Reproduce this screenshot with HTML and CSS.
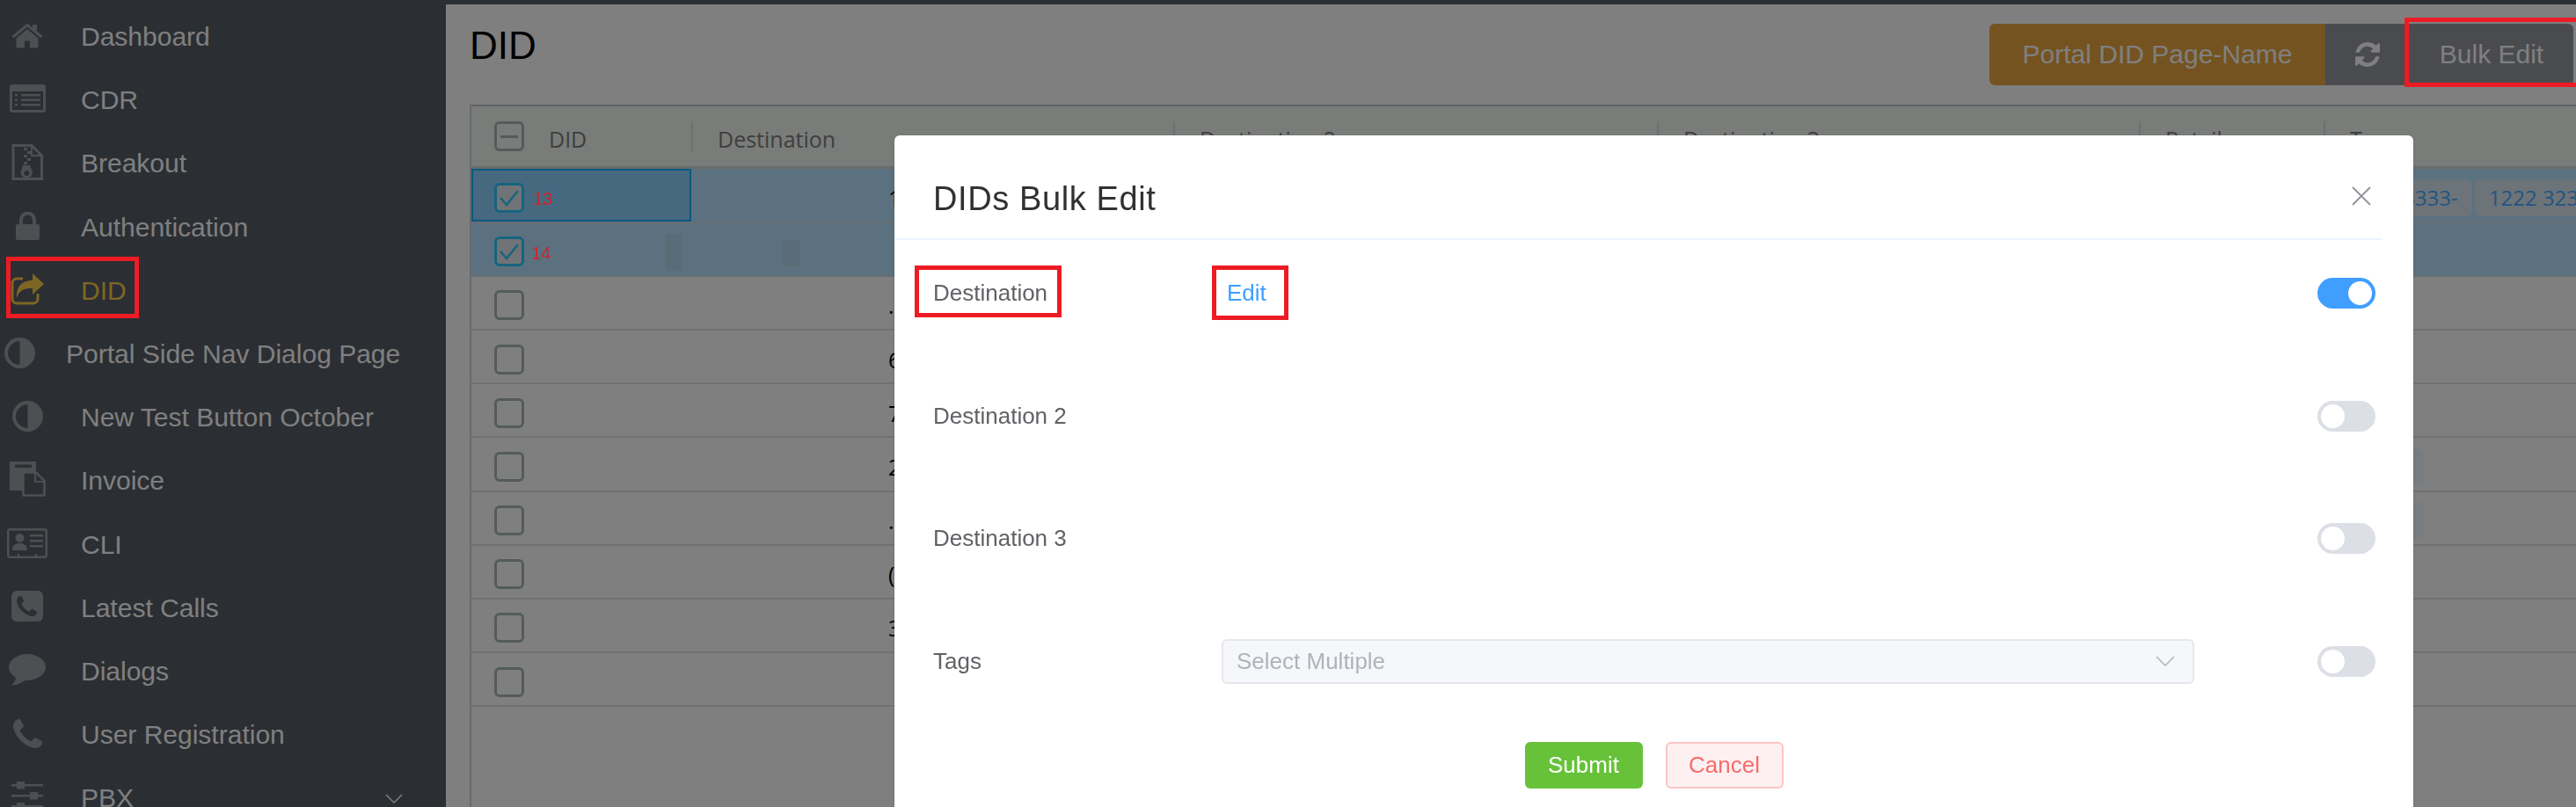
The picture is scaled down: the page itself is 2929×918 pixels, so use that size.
FILE: index.html
```html
<!DOCTYPE html>
<html lang="en">
<head>
  <meta charset="UTF-8">
  <title>DID</title>
  <link rel="stylesheet" href="styles.css">
</head>
<body>
  <!-- Side nav -->
  <aside class="sidebar">
    <a class="nav-item">
      <span class="nav-icon"><svg width="36" height="29" viewBox="0 0 36 29"><path d="M18 7 5.5 17.5V27A1.5 1.5 0 0 0 7 28.500h8v-8h6v8h8a1.500 1.500 0 0 0 1.500-1.500V17.500z"/><path d="M18 .5.500 15l2 2.500L18 4.500l15.500 13 2-2.500L29 9.600V2h-5v3.500z"/></svg></span>
      <span>Dashboard</span>
    </a>
    <a class="nav-item">
      <span class="nav-icon"><svg width="41" height="32" viewBox="0 0 41 32"><path fill-rule="evenodd" d="M3 0h35a3 3 0 0 1 3 3v26a3 3 0 0 1-3 3H3a3 3 0 0 1-3-3V3a3 3 0 0 1 3-3zm0 8v20.500a.5.5 0 0 0 .5.5h34a.5.5 0 0 0 .5-.5V8z"/><path d="M6 11h3v2.500H6zM13 11h22v2.500H13zM6 16.500h3V19H6zM13 16.500h22V19H13zM6 22h3v2.500H6zM13 22h22v2.500H13z"/></svg></span>
      <span>CDR</span>
    </a>
    <a class="nav-item">
      <span class="nav-icon"><svg width="36" height="41" viewBox="0 0 36 41"><path d="M2 1.500h21L34.500 13v26.500H2z" fill="none" stroke="currentColor" stroke-width="3"/><path d="M23 1.500V13h11.500" fill="none" stroke="currentColor" stroke-width="2"/><path d="M14 4h4v3h-4zM18 8h4v3h-4zM14 12h4v3h-4zM18 16h4v3h-4zM14 20h4v3h-4z"/><path fill-rule="evenodd" d="M13 24h8l3 8a6.500 6.500 0 1 1-13.500 0zM17.300 30a3 3 0 1 0 .01 0z"/></svg></span>
      <span>Breakout</span>
    </a>
    <a class="nav-item">
      <span class="nav-icon"><svg width="27" height="32" viewBox="0 0 27 32"><path d="M2 14h23a2 2 0 0 1 2 2v14a2 2 0 0 1-2 2H2a2 2 0 0 1-2-2V16a2 2 0 0 1 2-2z"/><path d="M6 15V9a7.500 7.500 0 0 1 15 0v6" fill="none" stroke="currentColor" stroke-width="4"/></svg></span>
      <span>Authentication</span>
    </a>
    <a class="nav-item nav-active">
      <span class="nav-icon"><svg width="38" height="36" viewBox="0 0 38 36"><path d="M14 6H7a5 5 0 0 0-5 5v18a5 5 0 0 0 5 5h19a5 5 0 0 0 5-5v-6" fill="none" stroke="currentColor" stroke-width="3"/><path d="M25 0l13 12-13 12v-7c-8 0-15 1-18 11C6 14 14 8 25 8z"/></svg></span>
      <span>DID</span>
    </a>
    <a class="nav-item nav-wide">
      <span class="nav-icon"><svg width="35" height="35" viewBox="0 0 35 35"><path fill-rule="evenodd" d="M17.500 0a17.500 17.500 0 1 0 0 35 17.500 17.500 0 0 0 0-35zm0 4a13.500 13.500 0 0 0 0 27z"/></svg></span>
      <span>Portal Side Nav Dialog Page</span>
    </a>
    <a class="nav-item">
      <span class="nav-icon"><svg width="35" height="35" viewBox="0 0 35 35"><path fill-rule="evenodd" d="M17.500 0a17.500 17.500 0 1 0 0 35 17.500 17.500 0 0 0 0-35zm0 4a13.500 13.500 0 0 0 0 27z"/></svg></span>
      <span>New Test Button October</span>
    </a>
    <a class="nav-item">
      <span class="nav-icon"><svg width="41" height="40" viewBox="0 0 41 40"><path fill-rule="evenodd" d="M1 0h28a1 1 0 0 1 1 1v32H1a1 1 0 0 1-1-1V1a1 1 0 0 1 1-1zm5 3.500V7h19V3.500z"/><path class="nav-cut" d="M15.500 12.500h14.500l9.500 9.500v16.500h-24z" stroke="currentColor" stroke-width="2.500"/><path d="M29 12.500V23h10.500" fill="none" stroke="currentColor" stroke-width="2"/></svg></span>
      <span>Invoice</span>
    </a>
    <a class="nav-item">
      <span class="nav-icon"><svg width="46" height="34" viewBox="0 0 46 34"><rect x="1.250" y="1.250" width="43.500" height="31.500" rx="2" fill="none" stroke="currentColor" stroke-width="2.500"/><circle cx="14.500" cy="11" r="5"/><path d="M6 25c0-6 4-8 8.500-8s8.500 2 8.500 8zM26 7h15v2.500H26zM26 13h15v2.500H26zM26 19h15v2.500H26zM12 29h2v3h-2zM32 29h2v3h-2z"/></svg></span>
      <span>CLI</span>
    </a>
    <a class="nav-item">
      <span class="nav-icon"><svg width="36" height="35" viewBox="0 0 36 35"><rect width="36" height="35" rx="6"/><svg class="nav-cut" x="6" y="6" width="23" height="23" viewBox="0 0 1408 1408"><path d="M1408 1112q0 27-10 70.500t-21 68.500q-21 50-122 106-94 51-186 51-27 0-53-3.500t-57.500-12.500-47-14.500-55.500-20.500-49-18q-98-35-175-83-127-79-264-216t-216-264q-48-77-83-175-3-9-18-49t-20.500-55.500-14.500-47-12.500-57.500-3.500-53q0-92 51-186 56-101 106-122 25-11 68.500-21t70.500-10q14 0 21 3 18 6 53 76 11 19 30 54t35 63.500 31 53.500q3 4 17.500 25t21.500 35.500 7 28.500q0 20-28.500 50t-62 55-62 53-28.500 46q0 9 5 22.500t8.500 20.500 14 24 11.500 19q76 137 174 235t235 174q2 1 19 11.500t24 14 20.500 8.500 22.500 5q18 0 46-28.500t53-62 55-62 50-28.500q14 0 28.500 7t35.500 21.500 25 17.500q25 15 53.500 31t63.500 35 54 30q70 35 76 53 3 7 3 21z"/></svg></svg></span>
      <span>Latest Calls</span>
    </a>
    <a class="nav-item">
      <span class="nav-icon"><svg width="42" height="36" viewBox="0 0 42 36"><ellipse cx="21" cy="15" rx="21" ry="15"/><path d="M8 25c0 5-2 8-5 11 7-1 13-4 17-7z"/></svg></span>
      <span>Dialogs</span>
    </a>
    <a class="nav-item">
      <span class="nav-icon"><svg width="33" height="33" viewBox="0 0 1408 1408"><path d="M1408 1112q0 27-10 70.500t-21 68.500q-21 50-122 106-94 51-186 51-27 0-53-3.500t-57.500-12.500-47-14.500-55.500-20.500-49-18q-98-35-175-83-127-79-264-216t-216-264q-48-77-83-175-3-9-18-49t-20.500-55.500-14.500-47-12.500-57.500-3.500-53q0-92 51-186 56-101 106-122 25-11 68.500-21t70.500-10q14 0 21 3 18 6 53 76 11 19 30 54t35 63.500 31 53.500q3 4 17.500 25t21.500 35.500 7 28.500q0 20-28.500 50t-62 55-62 53-28.500 46q0 9 5 22.500t8.500 20.500 14 24 11.500 19q76 137 174 235t235 174q2 1 19 11.500t24 14 20.500 8.500 22.500 5q18 0 46-28.500t53-62 55-62 50-28.500q14 0 28.500 7t35.500 21.500 25 17.500q25 15 53.500 31t63.500 35 54 30q70 35 76 53 3 7 3 21z"/></svg></span>
      <span>User Registration</span>
    </a>
    <a class="nav-item">
      <span class="nav-icon"><svg width="36" height="36" viewBox="0 0 36 36"><path d="M0 4h36v2.500H0zM0 16h36v2.500H0zM0 28h36v2.500H0zM6 1h9v8.500H6zM21 13h9v8.500h-9zM6 25h9v8.500H6z"/></svg></span>
      <span class="nav-label">PBX</span>
      <svg class="nav-arrow" width="20" height="11" viewBox="0 0 20 11"><path d="M1 1l9 9 9-9" fill="none" stroke="currentColor" stroke-width="1.500"/></svg>
    </a>
  </aside>

  <!-- Page content -->
  <main class="content">
    <div class="page-head">
      <h1 class="page-title">DID</h1>
      <div class="btn-group">
        <button class="head-btn head-btn-gold">Portal DID Page-Name</button>
        <button class="head-btn head-btn-icon"><svg width="28" height="28" viewBox="0 0 1536 1536"><path fill="currentColor" d="M1511 928q0 5-1 7-64 268-268 434.500t-478 166.500q-146 0-282.500-55t-243.500-157l-129 129q-19 19-45 19t-45-19-19-45v-448q0-26 19-45t45-19h448q26 0 45 19t19 45-19 45l-137 137q71 66 161 102t187 36q134 0 250-65t186-179q11-17 53-117 8-23 30-23h192q13 0 22.500 9.500t9.500 22.500zm25-800v448q0 26-19 45t-45 19h-448q-26 0-45-19t-19-45 19-45l138-138q-148-137-349-137-134 0-250 65t-186 179q-11 17-53 117-8 23-30 23h-199q-13 0-22.500-9.500t-9.500-22.500v-7q65-268 270-434.500t480-166.500q146 0 284 55.500t245 156.500l130-129q19-19 45-19t45 19 19 45z"/></svg></button>
        <button class="head-btn head-btn-last">Bulk Edit</button>
      </div>
    </div>

    <div class="grid">
      <div class="grid-row grid-head">
        <div class="head-cell head-first"><span class="check check-part"></span><span>DID</span></div>
        <div class="head-cell">Destination</div>
        <div class="head-cell">Destination 2</div>
        <div class="head-cell">Destination 3</div>
        <div class="head-cell">Retail</div>
        <div class="head-cell">Tags</div>
      </div>

      <div class="grid-row row-selected">
        <div class="cell cell-active"><span class="check check-on"><svg width="24" height="20" viewBox="0 0 24 20"><path d="M2 10l7 8L22 2" fill="none" stroke="currentColor" stroke-width="2.500"/></svg></span></div>
        <div class="cell cell-dest">1</div><div class="cell"></div><div class="cell"></div><div class="cell"></div>
        <div class="cell cell-tags"><span class="tag">1222 3333-</span><span class="tag">1222 3233-</span></div>
      </div>
      <div class="grid-row row-selected">
        <div class="cell"><span class="check check-on"><svg width="24" height="20" viewBox="0 0 24 20"><path d="M2 10l7 8L22 2" fill="none" stroke="currentColor" stroke-width="2.500"/></svg></span></div>
        <div class="cell cell-dest"></div><div class="cell"></div><div class="cell"></div><div class="cell"></div><div class="cell"></div>
        <span class="smudge smudge-a"></span><span class="smudge smudge-b"></span>
      </div>
      <div class="grid-row">
        <div class="cell"><span class="check"></span></div>
        <div class="cell cell-dest">.</div><div class="cell"></div><div class="cell"></div><div class="cell"></div><div class="cell"></div>
      </div>
      <div class="grid-row">
        <div class="cell"><span class="check"></span></div>
        <div class="cell cell-dest">6</div><div class="cell"></div><div class="cell"></div><div class="cell"></div><div class="cell"></div>
      </div>
      <div class="grid-row">
        <div class="cell"><span class="check"></span></div>
        <div class="cell cell-dest">7</div><div class="cell"></div><div class="cell"></div><div class="cell"></div><div class="cell"></div>
      </div>
      <div class="grid-row">
        <div class="cell"><span class="check"></span></div>
        <div class="cell cell-dest">2</div><div class="cell"></div><div class="cell"></div><div class="cell"></div>
        <div class="cell cell-tags"><span class="tag tag-short">12223</span></div>
      </div>
      <div class="grid-row">
        <div class="cell"><span class="check"></span></div>
        <div class="cell cell-dest">.</div><div class="cell"></div><div class="cell"></div><div class="cell"></div>
        <div class="cell cell-tags"><span class="tag tag-short">12223</span></div>
      </div>
      <div class="grid-row">
        <div class="cell"><span class="check"></span></div>
        <div class="cell cell-dest">(</div><div class="cell"></div><div class="cell"></div><div class="cell"></div><div class="cell"></div>
      </div>
      <div class="grid-row">
        <div class="cell"><span class="check"></span></div>
        <div class="cell cell-dest">3</div><div class="cell"></div><div class="cell"></div><div class="cell"></div><div class="cell"></div>
      </div>
      <div class="grid-row">
        <div class="cell"><span class="check"></span></div>
        <div class="cell cell-dest"></div><div class="cell"></div><div class="cell"></div><div class="cell"></div><div class="cell"></div>
      </div>
    </div>
  </main>

  <div class="mask"></div>

  <!-- Bulk edit dialog -->
  <div class="dialog">
    <div class="dialog-head">
      <h2 class="dialog-title">DIDs Bulk Edit</h2>
      <svg class="dialog-close" width="22" height="22" viewBox="0 0 22 22"><path d="M1 1l20 20M21 1L1 21" stroke="currentColor" stroke-width="1.800"/></svg>
    </div>
    <div class="dialog-body">
      <label class="field-label">Destination</label>
      <a class="field-edit">Edit</a>
      <span class="switch switch-on"><span class="switch-knob"></span></span>

      <label class="field-label">Destination 2</label>
      <span></span>
      <span class="switch"><span class="switch-knob"></span></span>

      <label class="field-label">Destination 3</label>
      <span></span>
      <span class="switch"><span class="switch-knob"></span></span>

      <label class="field-label">Tags</label>
      <div class="select">
        <span>Select Multiple</span>
        <svg width="22" height="12" viewBox="0 0 22 12"><path d="M1 1l10 10L21 1" fill="none" stroke="currentColor" stroke-width="1.500"/></svg>
      </div>
      <span class="switch"><span class="switch-knob"></span></span>
    </div>
    <div class="dialog-foot">
      <button class="btn btn-submit">Submit</button>
      <button class="btn btn-cancel">Cancel</button>
    </div>
  </div>

  <!-- Red annotation marks drawn over the screenshot -->
  <div class="mark mark-nav"></div>
  <div class="mark mark-bulk"></div>
  <div class="mark mark-label"></div>
  <div class="mark mark-edit"></div>
  <span class="mark-num mark-num-13">13</span>
  <span class="mark-num mark-num-14">14</span>
</body>
</html>
```

FILE: styles.css
```css
* {
  box-sizing: border-box;
}

html, body {
  margin: 0;
  height: 100%;
  overflow: hidden;
}

body {
  display: flex;
  font-family: "Liberation Sans", Arial, sans-serif;
  background: #ffffff;
}

/* Side nav */
.sidebar {
  flex: 0 0 507px;
  height: 100vh;
  padding-top: 6px;
  overflow: hidden;
  background: #565c66;
  color: #ffffff;
  font-size: 30px;
}

.nav-item {
  display: flex;
  align-items: center;
  height: 72.2px;
  color: #ffffff;
}

.nav-icon {
  display: flex;
  justify-content: center;
  flex: 0 0 62px;
  margin-right: 30px;
  margin-top: -4px;
  color: #9c9ea4;
}

.nav-icon svg {
  fill: currentColor;
  display: block;
}

.nav-icon .nav-cut {
  fill: #565c66;
}

.nav-active,
.nav-active .nav-icon {
  color: #fbcc48;
}

.nav-wide .nav-icon {
  flex-basis: 44px;
  margin-right: 31px;
}

.nav-label {
  flex: 1;
}

.nav-arrow {
  margin-right: 49px;
  color: #ffffff;
}

/* Page content */
.content {
  flex: 1;
  display: flex;
  flex-direction: column;
  min-width: 0;
  height: 100vh;
  padding-left: 27px;
  border-top: 5px solid #565c66;
}

.page-head {
  display: flex;
  justify-content: space-between;
  align-items: flex-start;
  height: 114px;
  padding: 22px 3px 0 0;
}

.page-title {
  margin: 4px 0 0;
  font-size: 44px;
  line-height: 42px;
  font-weight: 400;
  color: #000000;
}

.btn-group {
  display: flex;
}

.head-btn {
  height: 70px;
  padding: 0 36px;
  border: none;
  font-family: inherit;
  font-size: 30px;
  color: #ffffff;
  background: #94969f;
}

.head-btn-gold {
  width: 382px;
  padding: 0;
  background: #e8a640;
  border-radius: 6px 0 0 6px;
}

.head-btn-icon {
  display: flex;
  align-items: center;
  justify-content: center;
  width: 96px;
  padding: 0;
}

.head-btn-last {
  width: 186px;
  padding: 0;
  border-radius: 0 6px 6px 0;
}

/* DID table */
.grid {
  flex: 1;
  border-top: 2px solid #c0c4cc;
  border-left: 2px solid #ccd6e0;
  font-family: "Open Sans", sans-serif;
  font-size: 25px;
  color: #000000;
}

.grid-row {
  position: relative;
  display: grid;
  grid-template-columns: 250px 548px 550px 548px 210px 1fr;
  height: 61.2px;
  border-bottom: 2px solid #dee4e4;
}

.grid-head {
  height: 71.4px;
  align-items: center;
  background: #f5f8f5;
  border-bottom-width: 3px;
  border-bottom-color: #d4d8d8;
  color: #7c7e7e;
}

.head-cell {
  display: flex;
  align-items: center;
  height: 34px;
  padding: 5px 0 0 28px;
  border-left: 2px solid #dde0de;
}

.head-first {
  gap: 28px;
  padding-left: 26px;
  border-left: none;
}

.cell {
  display: flex;
  align-items: center;
  padding: 6px 0 0 26px;
  min-width: 0;
  overflow: hidden;
}

.cell-dest {
  padding-left: 224px;
}

.cell-active {
  box-shadow: inset 0 0 0 2px #14b4ff;
  background: #8dd2fe;
}

.row-selected {
  background: #b8e3ff;
  border-bottom-color: #ccdde8;
}

.check {
  display: flex;
  align-items: center;
  justify-content: center;
  flex: none;
  width: 34px;
  height: 34px;
  border: 3px solid #a8b6b6;
  border-radius: 6px;
}

.check-on {
  border-color: #2cc8ff;
  background: #e0e8ee;
  color: #2cc8ff;
}

.check-part {
  margin-top: -5px;
}

.check-part::after {
  content: "";
  width: 20px;
  height: 3px;
  background: #a8b6b6;
}

.cell-tags {
  gap: 3px;
  padding-left: 13px;
}

.tag {
  flex: none;
  display: flex;
  align-items: center;
  height: 42px;
  padding: 0 16px;
  border-radius: 6px;
  background: #d8e8f2;
  font-size: 24px;
  color: #4aa8ff;
}

.tag-short {
  background: #ecf8ff;
}

.smudge {
  position: absolute;
  top: 12px;
  height: 42px;
  background: #b2d8ee;
}

.smudge-a {
  left: 220px;
  width: 20px;
}

.smudge-b {
  left: 354px;
  top: 19px;
  width: 20px;
  height: 30px;
}

/* Dialog */
.mask {
  position: fixed;
  inset: 0;
  z-index: 10;
  background: rgba(0, 0, 0, 0.5);
}

.dialog {
  position: fixed;
  top: 154px;
  bottom: 0;
  left: 1017px;
  z-index: 11;
  width: 1727px;
  background: #ffffff;
  border-radius: 6px 6px 0 0;
  box-shadow: 0 1px 3px rgba(0, 0, 0, 0.2);
}

.dialog-head {
  display: flex;
  justify-content: space-between;
  align-items: center;
  height: 119px;
  margin-right: 35px;
  padding: 27px 13px 0 44px;
  border-bottom: 2px solid #ecf5ff;
}

.dialog-title {
  margin: 0;
  font-size: 38px;
  letter-spacing: 0.6px;
  font-weight: 400;
  color: #303133;
}

.dialog-close {
  margin-top: -6px;
  color: #909399;
}

.dialog-body {
  display: grid;
  grid-template-columns: 328px 1106px 1fr;
  grid-auto-rows: 81px;
  row-gap: 58.5px;
  align-items: center;
  padding: 20px 43px 0 44px;
}

.field-label {
  font-size: 26px;
  color: #606266;
}

.field-edit {
  padding-left: 6px;
  font-size: 26px;
  color: #409eff;
}

.switch {
  display: flex;
  justify-self: end;
  width: 66px;
  height: 35px;
  padding: 4px;
  border-radius: 18px;
  background: #dcdfe6;
}

.switch-on {
  justify-content: flex-end;
  background: #409eff;
}

.switch-knob {
  width: 27px;
  height: 27px;
  border-radius: 50%;
  background: #ffffff;
}

.select {
  display: flex;
  justify-content: space-between;
  align-items: center;
  height: 51px;
  padding: 0 20px 0 15px;
  background: #f5f7fa;
  border: 2px solid #e4e7ed;
  border-radius: 6px;
  font-size: 26px;
  color: #b0b3ba;
}

.dialog-foot {
  display: flex;
  justify-content: center;
  gap: 26px;
  margin-top: 51px;
}

.btn {
  width: 134px;
  height: 53px;
  border-radius: 6px;
  font-family: inherit;
  font-size: 26px;
}

.btn-submit {
  border: none;
  background: #67c23a;
  color: #ffffff;
}

.btn-cancel {
  border: 2px solid #fbc4c4;
  background: #fef0f0;
  color: #f56c6c;
}

/* Annotation marks */
.mark {
  position: fixed;
  z-index: 12;
  border: 5px solid #ed1c24;
}

.mark-nav {
  top: 292px;
  left: 7px;
  width: 151px;
  height: 70px;
}

.mark-bulk {
  top: 20px;
  left: 2734px;
  width: 220px;
  height: 79px;
}

.mark-label {
  top: 302px;
  left: 1040px;
  width: 167px;
  height: 59px;
}

.mark-edit {
  top: 302px;
  left: 1378px;
  width: 87px;
  height: 62px;
}

.mark-num {
  position: fixed;
  z-index: 12;
  font-size: 20px;
  line-height: 20px;
  color: #c9252f;
}

.mark-num-13 {
  top: 216px;
  left: 606px;
}

.mark-num-14 {
  top: 278px;
  left: 604px;
}
```
